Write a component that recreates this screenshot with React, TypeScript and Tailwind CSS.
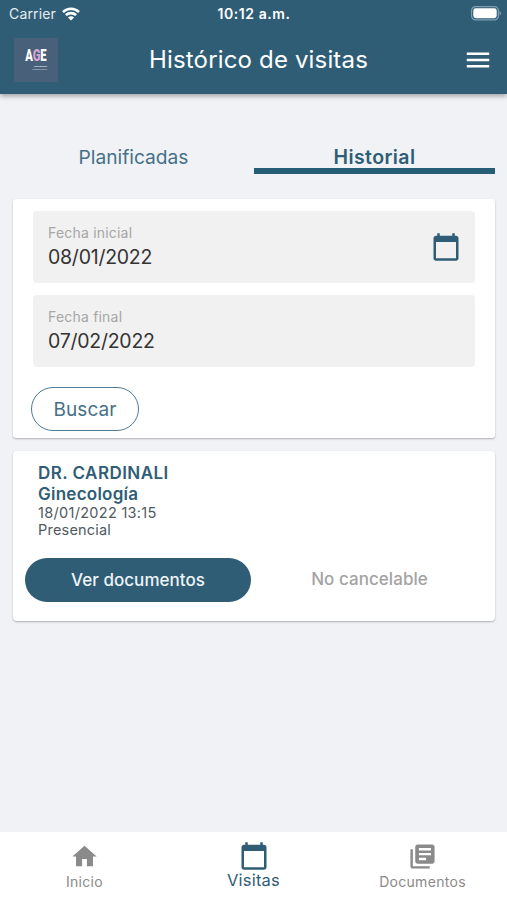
import type { ReactNode } from "react";
import { MdCalendarToday, MdHome, MdLibraryBooks, MdMenu } from "react-icons/md";

function WifiIcon() {
  return (
    <svg width="18" height="14" viewBox="0 0 18 14" fill="none" stroke="#fff" strokeWidth="2.6">
      <path d="M1 5.1C5.4.7 12.6.7 17 5.1" />
      <path d="M3.9 8.2c2.8-2.8 7.4-2.8 10.2 0" />
      <path d="M9 13.5 5.9 10.4c1.8-1.6 4.4-1.6 6.2 0z" fill="#fff" stroke="none" />
    </svg>
  );
}

function BatteryIcon() {
  return (
    <svg width="31" height="15" viewBox="0 0 31 15">
      <rect x="0.6" y="0.6" width="26.8" height="13.3" rx="4" fill="none" stroke="#7f9fb1" strokeWidth="1.2" />
      <rect x="2.3" y="2.3" width="23.4" height="9.9" rx="2.4" fill="#fff" />
      <path d="M28.6 5v4.6c1.9-.8 1.9-3.8 0-4.6z" fill="#7f9fb1" />
    </svg>
  );
}

function Header() {
  return (
    <header className="relative h-[94px] shrink-0 bg-[#2f5d76] text-white shadow-[0_2px_5px_rgba(0,0,0,0.35)]">
      <div className="grid h-[27px] grid-cols-3 items-center pl-[9px] pr-[5px]">
        <div className="flex items-center gap-[6px]">
          <span className="text-[14px] tracking-[0.15px] text-[#e4edf2]">Carrier</span>
          <WifiIcon />
        </div>
        <span className="-ml-[3px] text-center text-[14px] font-semibold tracking-[0.55px]">10:12 a.m.</span>
        <div className="flex justify-end">
          <BatteryIcon />
        </div>
      </div>
      <div className="flex h-[65px] items-center pl-[14px] pr-[14px]">
        <div className="flex h-[44px] w-[44px] flex-col items-end bg-[#48607a] pt-[9px] pr-[11px] font-[Roboto]">
          <span className="origin-right scale-x-[0.7] text-[16px] leading-[18px] font-black">
            A<span className="text-[#d6a5d8]">G</span>E
          </span>
          <span className="text-[2.3px] leading-[3px] font-bold">ASISTENCIA</span>
          <span className="text-[2.3px] leading-[3px] font-bold opacity-60">GINECOLOGIA</span>
        </div>
        <h1 className="flex-1 pr-[4px] text-center text-[24px] tracking-[0.16px]">Histórico de visitas</h1>
        <MdMenu size={30} />
      </div>
    </header>
  );
}

function DateField({ label, value, icon }: { label: string; value: string; icon?: ReactNode }) {
  return (
    <div className="flex h-[72px] items-center justify-between rounded-[4px] bg-[#f1f1f1] pl-[15px] pr-[14px]">
      <div className="flex flex-col">
        <span className="text-[14px] leading-[20px] tracking-[0.2px] text-[#a6a6a6]">{label}</span>
        <span className="text-[19.5px] leading-[28px] tracking-[-0.25px] text-[#333]">{value}</span>
      </div>
      {icon}
    </div>
  );
}

function NavItem({ icon, label, active }: { icon: ReactNode; label: string; active?: boolean }) {
  return (
    <div className={`flex flex-1 flex-col items-center pt-[9px] ${active ? "text-[#2f5d76]" : "text-[#8a8a8a]"}`}>
      <div className="flex h-[30px] items-center">{icon}</div>
      <span className={active ? "text-[16.5px] leading-[19px] tracking-[0.2px]" : "text-[14px] leading-[21px] tracking-[0.3px]"}>
        {label}
      </span>
    </div>
  );
}

export default function App() {
  return (
    <div className="flex h-[900px] w-[507px] flex-col overflow-hidden bg-[#f0f2f6] font-[Inter,sans-serif]">
      <Header />
      <main className="flex flex-1 flex-col pr-[12px] pl-[13px] pt-[46px]">
        <div className="grid h-[34px] grid-cols-2 text-center text-[19px] leading-[34px]">
          <span className="text-[19.2px] text-[#467087]">Planificadas</span>
          <span className="h-[34px] border-b-[6px] border-[#265e78] text-[19.5px] font-semibold tracking-[0.4px] text-[#2f5d76]">Historial</span>
        </div>
        <section className="mt-[25px] h-[239px] rounded-[3px] bg-white px-[20px] pt-[12px] shadow-[0_1px_2px_rgba(0,0,0,0.28)]">
          <DateField
            label="Fecha inicial"
            value="08/01/2022"
            icon={<MdCalendarToday size={30} className="text-[#2f5d76]" />}
          />
          <div className="h-[12px]" />
          <DateField label="Fecha final" value="07/02/2022" />
          <button className="mt-[20px] -ml-[2px] h-[44px] w-[108px] rounded-full border border-[#4d7c93] pt-[2px] text-[19px] tracking-[0.1px] text-[#467087]">
            Buscar
          </button>
        </section>
        <section className="mt-[13px] h-[170px] rounded-[4px] bg-white px-[12px] pt-[12px] shadow-[0_1px_2px_rgba(0,0,0,0.28)]">
          <div className="flex flex-col pl-[13px]">
            <span className="text-[17px] leading-[21px] font-semibold tracking-[0.45px] text-[#2f5d76]">DR. CARDINALI</span>
            <span className="text-[17px] leading-[20px] font-semibold tracking-[0.25px] text-[#2f5d76]">Ginecología</span>
            <span className="text-[14.5px] leading-[18px] tracking-[0.3px] text-[#4f5a61]">18/01/2022 13:15</span>
            <span className="text-[14.5px] leading-[16px] tracking-[0.2px] text-[#4f5a61]">Presencial</span>
          </div>
          <div className="mt-[20px] flex items-center">
            <button className="h-[44px] w-[226px] rounded-full bg-[#2f5d76] pt-px text-[17px] font-medium tracking-[0.05px] text-[#eef4f7]">
              Ver documentos
            </button>
            <span className="flex-1 pl-[5px] text-center text-[17px] font-medium tracking-[0.05px] text-[#a3a3a3]">No cancelable</span>
          </div>
        </section>
      </main>
      <nav className="flex h-[68px] shrink-0 bg-white">
        <NavItem icon={<MdHome size={29} />} label="Inicio" />
        <NavItem icon={<MdCalendarToday size={30} />} label="Visitas" active />
        <NavItem icon={<MdLibraryBooks size={29} />} label="Documentos" />
      </nav>
    </div>
  );
}
